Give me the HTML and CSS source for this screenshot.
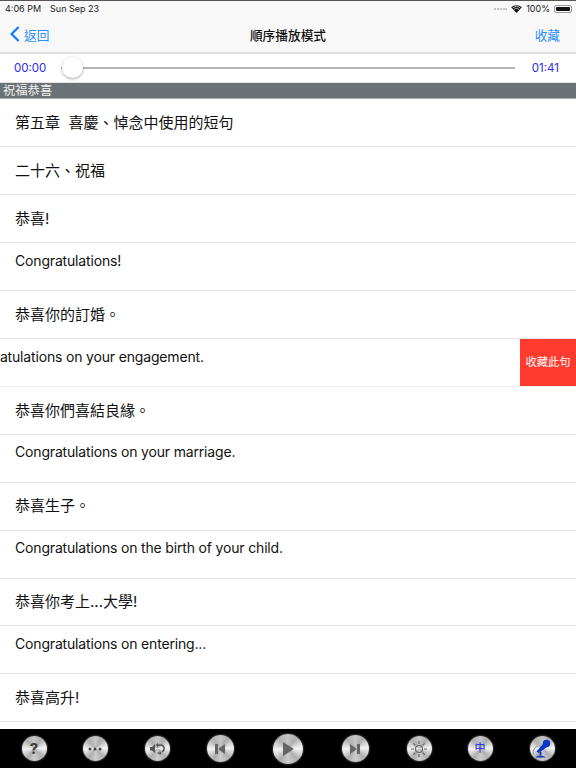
FILE: index.html
```html
<!DOCTYPE html>
<html lang="zh-Hant">
<head>
<meta charset="utf-8">
<title>順序播放模式</title>
<link rel="stylesheet" href="styles.css">
</head>
<body>
<div class="app">
  <header class="top">
    <div class="status">
      <span class="status-left"><span>4:06 PM</span><span>Sun Sep 23</span></span>
      <span class="status-right">
        <svg class="dots" width="13" height="2" viewBox="0 0 13 2"><g fill="#c4c4c4"><rect x="0" width="2" height="2"/><rect x="3" width="2" height="2"/><rect x="6" width="2" height="2"/><rect x="9" width="2" height="2"/><rect x="11.500" width="1.500" height="2"/></g></svg>
        <svg width="11" height="8" viewBox="0 0 12 9"><path d="M6 9 L0 2.600 C3.400 -.6 8.600 -.6 12 2.600Z" fill="#111"/><path d="M1.800 3.300C4.200 1.200 7.800 1.200 10.200 3.300" stroke="#fff" stroke-width=".8" fill="none"/><path d="M3.300 5C5 3.600 7 3.600 8.700 5" stroke="#fff" stroke-width=".8" fill="none"/></svg>
        <span>100%</span>
        <span class="battery"><span class="battery-fill"></span></span>
      </span>
    </div>
    <nav class="nav">
      <a class="back"><svg width="10" height="16" viewBox="0 0 10 16"><path d="M8.600 1 L1.600 8 L8.600 15" fill="none" stroke="#0a7aff" stroke-width="2.200"/></svg><span>返回</span></a>
      <h1 class="title">順序播放模式</h1>
      <a class="fav">收藏</a>
    </nav>
  </header>

  <div class="player">
    <span class="time">00:00</span>
    <div class="track"><span class="thumb"></span></div>
    <span class="time">01:41</span>
  </div>

  <div class="section">祝福恭喜</div>

  <main class="list">
    <div class="row zh">第五章&nbsp;&nbsp;喜慶、悼念中使用的短句</div>
    <div class="row zh">二十六、祝福</div>
    <div class="row zh">恭喜!</div>
    <div class="row en">Congratulations!</div>
    <div class="row zh">恭喜你的訂婚。</div>
    <div class="row en swiped"><span class="swiped-text">Congratulations on your engagement.</span><span class="action">收藏此句</span></div>
    <div class="row zh">恭喜你們喜結良緣。</div>
    <div class="row en">Congratulations on your marriage.</div>
    <div class="row zh">恭喜生子。</div>
    <div class="row en">Congratulations on the birth of your child.</div>
    <div class="row zh">恭喜你考上...大學!</div>
    <div class="row en">Congratulations on entering...</div>
    <div class="row zh">恭喜高升!</div>
  </main>

  <footer class="toolbar">
    <span class="btn"><span class="glyph q">?</span></span>
    <span class="btn"><svg width="14" height="4" viewBox="0 0 14 4"><g fill="#444"><circle cx="2" cy="2" r="1.500"/><circle cx="7" cy="2" r="1.500"/><circle cx="12" cy="2" r="1.500"/></g></svg></span>
    <span class="btn"><svg width="16" height="14" viewBox="0 0 16 14"><path d="M1 5h2l3-3v9L3 8.500H1z" fill="#555"/><path d="M8 3h3.500a3.500 3.500 0 0 1 1.500 6.700M10.500 11H8.500" fill="none" stroke="#555" stroke-width="1.600"/><path d="M9 .8 6.800 3 9 5.200zM10.500 9l2.200 2-2.200 2.200z" fill="#555"/></svg></span>
    <span class="btn mid"><svg width="12" height="12" viewBox="0 0 12 12"><path d="M1 1h3v10H1zM11 1v10L4 6z" fill="#666"/></svg></span>
    <span class="btn big"><svg width="12" height="14" viewBox="0 0 12 14"><path d="M1 0v14l11-7z" fill="#666"/></svg></span>
    <span class="btn mid"><svg width="12" height="12" viewBox="0 0 12 12"><path d="M11 1H8v10h3zM1 1v10l7-5z" fill="#666"/></svg></span>
    <span class="btn"><svg width="16" height="16" viewBox="0 0 16 16"><circle cx="8" cy="8" r="3.500" fill="none" stroke="#666" stroke-width="1.200"/><path d="M8 0v3M8 13v3M0 8h3M13 8h3M2.300 2.300l2.100 2.100M11.600 11.600l2.100 2.100M2.300 13.700l2.100-2.100M11.600 4.400l2.100-2.100" stroke="#666" stroke-width="1.200"/></svg></span>
    <span class="btn"><span class="glyph zhong">中</span></span>
    <span class="btn"><svg width="20" height="20" viewBox="0 0 20 20"><path d="M11 5 14.500 8.500 6.500 14 4.500 12.500z" fill="#0b34c8"/><circle cx="14.500" cy="4.500" r="3.700" fill="#0b34c8"/><path d="M8.500 13v3.500" stroke="#0b34c8" stroke-width="1.800"/><path d="M3.500 18.500c1-2.500 9-2.500 10 0z" fill="#0b34c8"/><path d="M1.500 15C.5 11 3 8 6 7" fill="none" stroke="#777" stroke-width=".8"/></svg></span>
  </footer>
</div>
</body>
</html>
```
FILE: styles.css
```css
* { box-sizing: border-box; }
html, body { margin: 0; padding: 0; }
body {
  width: 576px;
  height: 768px;
  overflow: hidden;
  background: #fff;
  font-family: Inter, "Liberation Sans", "Noto Sans CJK TC", sans-serif;
  color: #111;
}
.app { display: flex; flex-direction: column; height: 768px; }

.top {
  height: 54px;
  flex: none;
  background: #f8f8f8;
  border-top: 1px solid #555;
  border-bottom: 2px solid #e2e2e2;
}
.status {
  height: 15px;
  padding: 0 4px 0 5px;
  display: flex;
  justify-content: space-between;
  align-items: center;
  font-size: 9px;
  color: #222;
}
.status-left { display: flex; gap: 9px; }
.status-right { display: flex; align-items: center; gap: 4px; }
.battery {
  display: flex;
  width: 18px;
  height: 8px;
  padding: 1px;
  border: 1px solid #999;
  border-radius: 2px;
}
.battery-fill { flex: 1; background: #111; border-radius: 1px; }

.nav {
  height: 36px;
  padding: 0 16px 0 10px;
  display: flex;
  align-items: center;
  justify-content: space-between;
  position: relative;
}
.back { display: flex; align-items: center; gap: 4px; color: #2c8fff; font-size: 12.700px; }
.fav { color: #2c8fff; font-size: 12.700px; }
.title {
  margin: 0;
  position: absolute;
  left: 0;
  right: 0;
  text-align: center;
  font-size: 12.700px;
  font-weight: 500;
  color: #111;
}

.player {
  height: 29px;
  flex: none;
  display: flex;
  align-items: center;
  padding: 0 17px 0 14px;
  background: #fff;
  border-bottom: 1px solid #e4e4e4;
}
.time { font-size: 11.500px; color: #2a2ae8; }
.track {
  flex: 1;
  height: 2px;
  margin-left: 15px;
  margin-right: 17px;
  background: #b5b5b5;
  position: relative;
}
.thumb {
  position: absolute;
  left: 1px;
  top: -10px;
  width: 21px;
  height: 21px;
  border-radius: 50%;
  background: #fff;
  box-shadow: 0 1px 3px rgba(0,0,0,.35);
}

.section {
  height: 16px;
  flex: none;
  padding-left: 3px;
  background: #6c7376;
  border-bottom: 1px solid #a9adae;
  color: #f2f2f2;
  font-size: 12.300px;
  line-height: 15px;
}

.list { flex: 1; min-height: 0; overflow: hidden; }
.row {
  height: 47.960px;
  padding-left: 15px;
  border-bottom: 1px solid #e6e6e6;
  font-size: 15px;
  color: #111;
}
.zh { padding-top: .85px; line-height: 46.700px; }
.en { padding-top: 8.800px; line-height: 18px; font-size: 14px; letter-spacing: -.17px; }
.swiped {
  position: relative;
  padding-left: 0;
  overflow: hidden;
  white-space: nowrap;
  border-bottom-color: #f0f0f0;
}
.swiped-text { display: block; margin-left: -40px; }
.action {
  position: absolute;
  right: 0;
  top: 0;
  width: 56px;
  height: 48px;
  background: #ff3b30;
  color: #fff;
  font-size: 11.300px;
  letter-spacing: 0;
  line-height: 47px;
  text-align: center;
}

.toolbar {
  height: 39px;
  flex: none;
  background: #000;
  display: grid;
  grid-template-columns: 61px 62px 63px 68px 67px 64px 61px 62px 34px;
  padding-left: 34px;
  align-items: center;
  justify-items: start;
}
.btn {
  width: 25px;
  height: 25px;
  margin-left: -12.500px;
  border-radius: 50%;
  display: flex;
  align-items: center;
  justify-content: center;
  background: conic-gradient(from 0deg, #c6c6c6, #adadad 10%, #f4f4f4 24%, #b0b0b0 38%, #cccccc 50%, #adadad 60%, #f4f4f4 74%, #b0b0b0 88%, #c6c6c6);
  box-shadow: 0 0 2px rgba(255,255,255,.6);
}
.mid { width: 27px; height: 27px; margin-left: -13.500px; }
.big { width: 30px; height: 30px; margin-left: -15px; }
.glyph { line-height: 1; }
.q { font-size: 15px; font-weight: 700; color: #3a3a3a; }
.zhong { font-size: 11px; color: #1a1ae8; }
```
